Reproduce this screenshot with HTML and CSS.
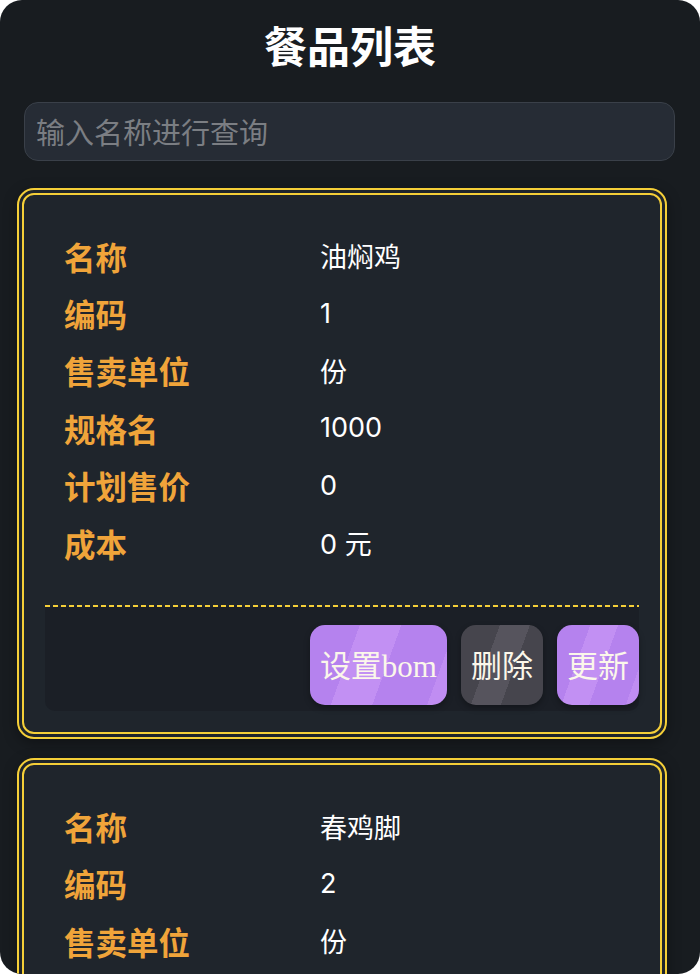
FILE: index.html
```html
<!DOCTYPE html>
<html lang="zh">
<head>
<meta charset="utf-8">
<link rel="stylesheet" href="styles.css">
</head>
<body>
<div class="app">
  <h1 class="title">餐品列表</h1>
  <div class="search">输入名称进行查询</div>

  <div class="card">
    <div class="info">
      <div class="row"><span class="label">名称</span><span class="value">油焖鸡</span></div>
      <div class="row"><span class="label">编码</span><span class="value">1</span></div>
      <div class="row"><span class="label">售卖单位</span><span class="value">份</span></div>
      <div class="row"><span class="label">规格名</span><span class="value">1000</span></div>
      <div class="row"><span class="label">计划售价</span><span class="value">0</span></div>
      <div class="row"><span class="label">成本</span><span class="value">0 元</span></div>
    </div>
    <div class="divider"></div>
    <div class="actions">
      <button class="btn btn-purple">设置bom</button>
      <button class="btn btn-gray">删除</button>
      <button class="btn btn-purple">更新</button>
    </div>
  </div>

  <div class="card">
    <div class="info">
      <div class="row"><span class="label">名称</span><span class="value">春鸡脚</span></div>
      <div class="row"><span class="label">编码</span><span class="value">2</span></div>
      <div class="row"><span class="label">售卖单位</span><span class="value">份</span></div>
      <div class="row"><span class="label">规格名</span><span class="value">1000</span></div>
      <div class="row"><span class="label">计划售价</span><span class="value">0</span></div>
      <div class="row"><span class="label">成本</span><span class="value">0 元</span></div>
    </div>
    <div class="divider"></div>
    <div class="actions">
      <button class="btn btn-purple">设置bom</button>
      <button class="btn btn-gray">删除</button>
      <button class="btn btn-purple">更新</button>
    </div>
  </div>
</div>
</body>
</html>
```

FILE: styles.css
```css
html, body {
  margin: 0;
  padding: 0;
  background: #ffffff;
}

.app {
  width: 700px;
  height: 974px;
  overflow: hidden;
  border-radius: 22px;
  background: #181c20;
  font-family: "Noto Sans CJK SC", "Noto Sans", sans-serif;
  padding-top: 14px;
  box-sizing: border-box;
}

.title {
  margin: 0;
  text-align: center;
  font-size: 43px;
  line-height: 60px;
  font-weight: 700;
  color: #ffffff;
}

.search {
  margin: 28px 25px 27px 24px;
  height: 59px;
  box-sizing: border-box;
  border: 1.5px solid #3a4049;
  border-radius: 14px;
  background: #262c35;
  color: #7b7e83;
  font-size: 29px;
  line-height: 56px;
  padding-left: 11px;
}

.card {
  margin: 0 33px 19px 17px;
  border: 7px double #f5cf38;
  border-radius: 17px;
  background: #1f252c;
  padding: 32px 21px 21px;
  box-shadow: 0 4px 14px rgba(0, 0, 0, 0.35);
}

.info {
  padding-left: 19px;
}

.row {
  display: grid;
  grid-template-columns: 256px 1fr;
  align-items: center;
  height: 57.4px;
}

.label {
  color: #f0a43a;
  font-size: 31.5px;
  font-weight: 700;
}

.value {
  color: #ffffff;
  font-family: "Inter", "Noto Sans CJK SC", sans-serif;
  font-size: 27px;
}

.divider {
  margin-top: 34px;
  height: 2px;
  background-image: repeating-linear-gradient(90deg, #f5cf38 0 5px, transparent 5px 8px);
}

.actions {
  display: flex;
  justify-content: flex-end;
  gap: 14px;
  background: #1b1f26;
  padding: 18px 0 6px;
  border-radius: 0 0 10px 10px;
}

.btn {
  height: 80px;
  padding: 0 10px 4px;
  border: none;
  border-radius: 15px;
  font-family: "Liberation Serif", "Noto Sans CJK SC", serif;
  font-size: 31px;
  color: #fbf7ea;
  box-shadow: 0 3px 6px rgba(0, 0, 0, 0.3);
}

.btn-purple {
  background: linear-gradient(110deg, #b582ee 0 30%, #c290f3 30% 55%, #b582ee 55% 88%, #c08df2 88%);
}

.btn-gray {
  background: linear-gradient(110deg, #46454d 0 35%, #56545d 35% 62%, #46454d 62%);
}
```
